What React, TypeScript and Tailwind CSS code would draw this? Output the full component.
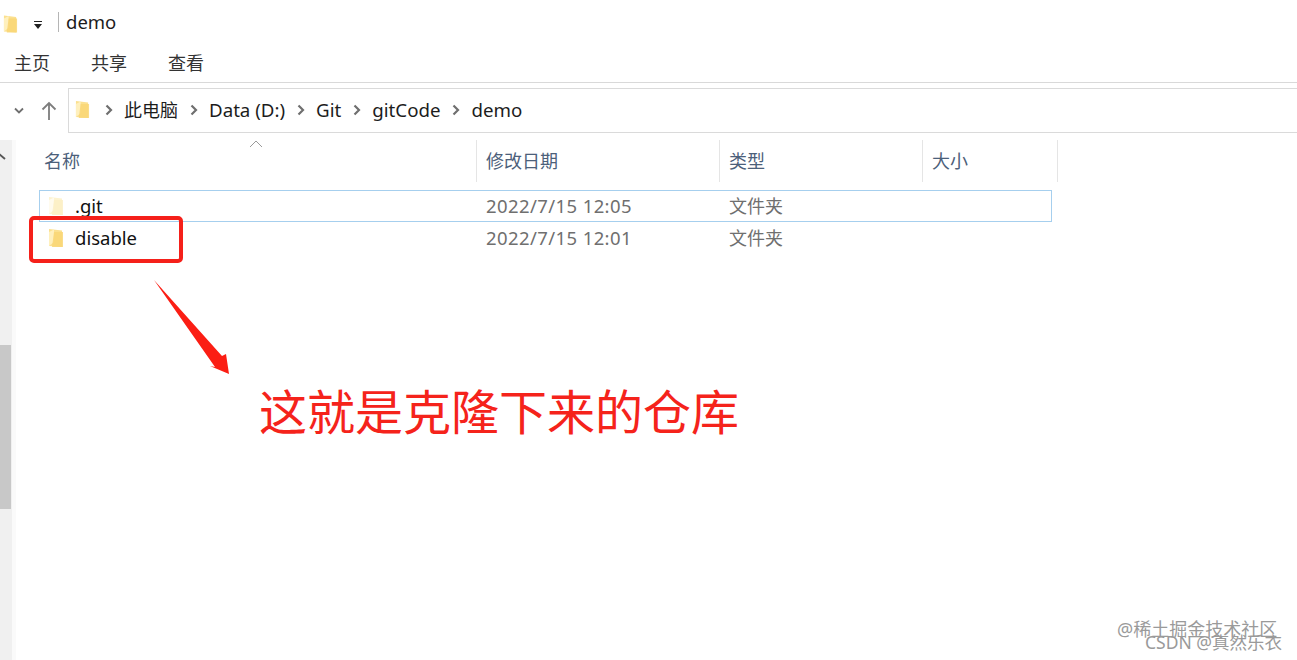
import React from "react";

const font = "font-['Noto_Sans','Noto_Sans_CJK_SC',sans-serif]";

// squeezed explorer folder glyph
function Folder({ pale = false, className = "" }: { pale?: boolean; className?: string }) {
  return (
    <svg viewBox="0 0 16 20" className={className}>
      <path d="M1 1 L14 2.5 V19 L1 18 Z" fill={pale ? "#fdf3d0" : "#fbe08f"} />
      <path d="M1 4 L6 1.5 V14 L1 18 Z" fill={pale ? "#fffbee" : "#fff0bd"} />
      <path d="M6 4 L15 4 V19 L4 19 Z" fill={pale ? "#fbeec6" : "#f9d675"} opacity="0.85" />
    </svg>
  );
}

function Chevron() {
  return (
    <svg viewBox="0 0 8 12" className="w-[8px] h-[12px] shrink-0">
      <path d="M1.5 1.5 L6 6 L1.5 10.5" fill="none" stroke="#6f6f6f" strokeWidth="2.2" />
    </svg>
  );
}

function Crumb({ label, size = "text-[18.7px]" }: { label: string; size?: string }) {
  return (
    <div className="flex items-center gap-[11px]">
      <Chevron />
      <span className={`${size} leading-[24px] text-[#1c1c1c]`}>{label}</span>
    </div>
  );
}

function HeaderCell({ label, className = "" }: { label: string; className?: string }) {
  return <div className={`flex items-center pt-[1px] text-[18px] text-[#4c607a] border-r border-[#e5e5e5] ${className}`}>{label}</div>;
}

function Row({ name, date, pale, selected }: { name: string; date: string; pale?: boolean; selected?: boolean }) {
  return (
    <div className={`flex items-center h-[32px] w-[1013px] ml-[39px] border ${selected ? "border-[#a6cfee]" : "border-transparent"}`}>
      <div className="w-[437px] flex items-center pl-[8px] gap-[11px]">
        <Folder pale={pale} className="w-[16px] h-[20px]" />
        <span className="text-[18.5px] text-[#111111]">{name}</span>
      </div>
      <div className="w-[243px] pl-[9px] text-[18.5px] tracking-[0.4px] text-[#6f6f6f]">{date}</div>
      <div className="pl-[9px] text-[18px] text-[#6f6f6f]">文件夹</div>
    </div>
  );
}

export default function App() {
  return (
    <div className={`relative w-[1297px] h-[660px] overflow-hidden bg-white flex flex-col ${font}`}>
      {/* title bar */}
      <div className="h-[44px] flex items-center shrink-0">
        <Folder className="w-[15px] h-[20px] ml-[3px] mt-[4px]" />
        <svg viewBox="0 0 10 10" className="w-[10px] h-[10px] ml-[15px] mt-[5px]">
          <path d="M1 1 H9 V2 H1 Z M1 4 H9 L5 9 Z" fill="#222222" />
        </svg>
        <div className="w-px h-[20px] bg-[#b5b5b5] ml-[15px]" />
        <span className="ml-[7px] text-[18.5px] text-[#1c1c1c]">demo</span>
      </div>
      {/* ribbon tabs */}
      <div className="h-[39px] shrink-0 flex items-center pl-[14px] gap-[41px] text-[18px] text-[#333333] border-b border-[#d9d9d9]">
        <span>主页</span>
        <span>共享</span>
        <span>查看</span>
      </div>
      {/* address bar */}
      <div className="h-[57px] shrink-0 flex items-start pt-[5px]">
        <svg viewBox="0 0 10 8" className="w-[10px] h-[8px] ml-[14px] mt-[19px]">
          <path d="M1 1.5 L5 5.5 L9 1.5" fill="none" stroke="#6f6f6f" strokeWidth="1.8" />
        </svg>
        <svg viewBox="0 0 16 20" className="w-[16px] h-[20px] ml-[17px] mt-[13px]">
          <path d="M8 19 V2 M1.5 8.5 L8 2 L14.5 8.5" fill="none" stroke="#7d7d7d" strokeWidth="1.8" />
        </svg>
        <div className="ml-[11px] flex-1 h-[45px] border border-r-0 border-[#dadada] flex items-center pl-[6px] pb-[2px] gap-[10px]">
          <Folder className="w-[15px] h-[21px]" />
          <div className="ml-[5px] flex items-center gap-[12px]">
            <Crumb label="此电脑" size="text-[18px]" />
            <Crumb label="Data (D:)" />
            <Crumb label="Git" />
            <Crumb label="gitCode" />
            <Crumb label="demo" />
          </div>
        </div>
      </div>
      {/* body */}
      <div className="flex-1 flex min-h-0">
        {/* scrollbar */}
        <div className="w-[12px] bg-[#f0f0f0] flex flex-col">
          <svg viewBox="0 0 10 10" className="w-[10px] h-[10px] mt-[11px] shrink-0">
            <path d="M-2 2 L5 8" fill="none" stroke="#555555" strokeWidth="2" />
          </svg>
          <div className="w-[11px] h-[164px] bg-[#c8c8c8] mt-[184px]" />
        </div>
        <div className="w-[4px] bg-[#fafafa]" />
        <div className="flex-1 -ml-[16px] relative">
          <svg viewBox="0 0 14 8" className="absolute left-[249px] top-0 w-[14px] h-[8px]">
            <path d="M1 7 L7 1 L13 7" fill="none" stroke="#9a9a9a" strokeWidth="1" />
          </svg>
          <div className="flex h-[42px] pl-[44px]">
            <HeaderCell label="名称" className="w-[433px]" />
            <HeaderCell label="修改日期" className="w-[243px] pl-[9px]" />
            <HeaderCell label="类型" className="w-[203px] pl-[9px]" />
            <HeaderCell label="大小" className="w-[135px] pl-[9px]" />
          </div>
          <div className="mt-[8px]">
            <Row name=".git" date="2022/7/15 12:05" pale selected />
            <Row name="disable" date="2022/7/15 12:01" />
          </div>
        </div>
      </div>

      {/* red annotations over the screenshot */}
      <div className="absolute left-[29px] top-[216px] w-[154px] h-[47px] border-[4px] border-[#f5201a] rounded-[5px]" />
      <svg viewBox="0 0 90 100" className="absolute left-[150px] top-[278px] w-[90px] h-[100px]">
        <path d="M4 2 L72 78 L76 76 L79 96 L60 88 L65 89 Z" fill="#fb1e14" />
      </svg>
      <div className="absolute left-[259px] top-[379px] text-[48px] leading-[66px] text-[#f5231b] whitespace-nowrap">这就是克隆下来的仓库</div>

      {/* watermarks */}
      <div className="absolute left-[1117px] top-[617px] text-[18px] leading-[24px] text-[#9a9a9a] whitespace-nowrap">@稀土掘金技术社区</div>
      <div className="absolute left-[1145px] top-[630px] text-[17.5px] leading-[24px] text-[#9a9a9a] whitespace-nowrap">CSDN @真然乐衣</div>
    </div>
  );
}
